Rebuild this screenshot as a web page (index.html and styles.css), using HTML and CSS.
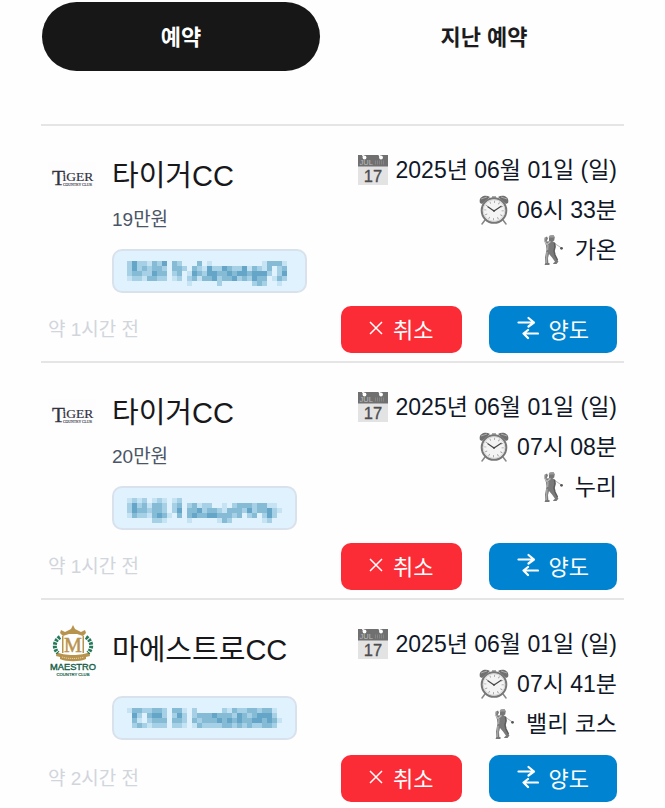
FILE: index.html
```html
<!DOCTYPE html>
<html lang="ko">
<head>
    <meta charset="UTF-8">
    <meta name="viewport" content="width=device-width, initial-scale=1.0">
    <title>예약</title>
    <link rel="stylesheet" href="styles.css">
</head>
<body>
    <!-- shared icons -->
    <svg class="sprite" aria-hidden="true">
        <symbol id="calendar" viewBox="0 0 30 30">
            <path d="M0 0h30v30H0z" fill="#e3e3e3"/>
            <path d="M0 0h30v11.500H0z" fill="#707070"/>
            <circle cx="6.500" cy="2.500" r="1.900" fill="#fff"/>
            <circle cx="23" cy="2.500" r="1.900" fill="#fff"/>
            <path d="M6.500 2.500L4.500 0M23 2.500L21 0" stroke="#fff" stroke-width="1.500"/>
            <text x="1.500" y="10.300" font-size="7.500" fill="#bbb">JUL</text>
            <path d="M17 7.500h10" stroke="#858585" stroke-width="4" stroke-dasharray="1 1"/>
            <text x="15" y="26.500" font-size="16.500" text-anchor="middle" fill="#4c4c4c" stroke="#4c4c4c" stroke-width="0.300">17</text>
        </symbol>
        <symbol id="clock" viewBox="0 0 30 30">
            <path d="M6 25l-3 4M24 25l3 4" stroke="#888" stroke-width="1.500" stroke-linecap="round"/>
            <path d="M1 8C-1 2 6-1 11 2L3 9zM29 8c2-6-5-9-10-6l8 7z" fill="#707070"/>
            <path d="M2 4l6-2M22 2l6 2" stroke="#aaa" stroke-width="1"/>
            <path d="M13 1h4v3h-4z" fill="#aaa"/>
            <circle cx="15" cy="15.500" r="12.300" fill="#eee" stroke="#777" stroke-width="2"/>
            <circle cx="15" cy="15.500" r="10.800" fill="#f4f4f4" stroke="#bbb" stroke-width="0.500"/>
            <circle cx="15" cy="15.500" r="8.700" fill="none" stroke="#999" stroke-width="2.200" stroke-dasharray="0.800 3.755"/>
            <path d="M8.500 11.500l6.500 4.500 7.500-5" fill="none" stroke="#444" stroke-width="1.100"/>
            <circle cx="15" cy="15.800" r="1" fill="#444"/>
        </symbol>
        <symbol id="golfer" viewBox="0 0 30 30">
            <path d="M14 6l10.500 7" stroke="#999" stroke-width="0.700"/>
            <circle cx="24.500" cy="13.300" r="1.400" fill="#555"/>
            <path d="M12 2.500l1.500-2 3 0 1.200 2-.500 3-2.700 1.500-2.500-1z" fill="#777"/>
            <path d="M11.500 2.500l1-2 4-.500 1.500 2.500z" fill="#999"/>
            <path d="M7 4.500l1-2 2-1 1 2-1.500 3 5.500-.500 3 1.500.500 4-1.500 4.500 1 4 3 6-2.500 1.500-3.500-5-3-3.500-1 4 .500 7.500H8.500l-.500-8 1.500-8-.500-4z" fill="#7a7a7a"/>
            <path d="M10 17l-.800 11M11 10l-.500 5" fill="none" stroke="#a5a5a5" stroke-width="1.500"/>
            <path d="M17.500 8l.500 4-1 4 1 4 2.500 5" fill="none" stroke="#5c5c5c" stroke-width="1.500"/>
            <path d="M8 2.500L7.500 6l2.500 3.500 3.500-3" fill="none" stroke="#bbb" stroke-width="1.200"/>
            <path d="M8.500 28h4v2h-5zM16.500 28l3.500-3 1.500 1.500-2 2.500h-3.500z" fill="#777"/>
        </symbol>
        <symbol id="cross" viewBox="0 0 14 14">
            <path d="M1 1l12 12M13 1L1 13" fill="none" stroke="currentColor" stroke-width="1.500"/>
        </symbol>
        <symbol id="swap" viewBox="0 0 22 24">
            <path d="M1.500 6.500H17M11.500 2l5.500 4.500-5.500 4" fill="none" stroke="currentColor" stroke-width="2.200" stroke-linecap="round" stroke-linejoin="round"/>
            <path d="M21 17.500H6.500M11 14l-4.500 3.500 4.500 4.500" fill="none" stroke="currentColor" stroke-width="2.200" stroke-linecap="round" stroke-linejoin="round"/>
        </symbol>
        <symbol id="tiger" viewBox="0 0 50 56">
            <path d="M0 12h48v27H0z" fill="#fdfdfe"/>
            <g font-family="Liberation Serif, serif" fill="#33343f" stroke="#33343f">
                <text x="4" y="35" font-size="21" stroke-width="0.300">T</text>
                <text x="14.500" y="31" font-size="13.500" stroke-width="0.200">iGER</text>
                <text x="15" y="35.500" font-size="3.800" stroke-width="0.100">COUNTRY CLUB</text>
            </g>
        </symbol>
        <symbol id="maestro" viewBox="0 0 50 56">
            <g fill="#b8934d">
                <path d="M25 1l2 4 6 3 4-2 1 3-3 3-6-2H21l-6 2-3-3 1-3 4 2 6-3z"/>
                <path d="M14 12h1.500v17H14zM34.500 12H36v17h-1.500z"/>
                <path d="M9 28c5 4 27 4 32 0l1 4-4 1v2c-6 3-20 3-26 0v-2l-4-1z"/>
                <text x="25" y="27.500" font-size="20" text-anchor="middle" stroke="#b8934d" stroke-width="0.500" font-family="Liberation Serif, serif">M</text>
            </g>
            <path d="M14 33c6 2 16 2 22 0" fill="none" stroke="#eadbb9" stroke-width="1" stroke-dasharray="1 1"/>
            <path d="M12 13C6 17 5 24 10 29M38 13c6 4 7 11 2 16" fill="none" stroke="#27795a" stroke-width="4" stroke-dasharray="2.500 1"/>
            <g fill="#175f49" stroke="#175f49" font-family="Liberation Sans, sans-serif" text-anchor="middle">
                <text x="25" y="46" font-size="9.300" stroke-width="0.400">MAESTRO</text>
                <text x="25" y="51.500" font-size="4.200" stroke-width="0.200">COUNTRY CLUB</text>
            </g>
        </symbol>
    </svg>

    <main class="container">
        <nav class="tabs">
            <button class="tab active" type="button">예약</button>
            <button class="tab" type="button">지난 예약</button>
        </nav>

        <section class="list">
            <article class="item">
                <div class="summary">
                    <svg class="logo"><use href="#tiger"/></svg>
                    <div class="info">
                        <h2 class="name">타이거CC</h2>
                        <p class="price">19만원</p>
                        <div class="badge"><svg class="mosaic" data-rows="242213240320003010000000000133310|242323320332032142243224132130230|233224330230143244334344344420240|122133220120231334233423243301320|000000000000100000200000023200100"></svg></div>
                    </div>
                    <div class="details">
                        <p><svg class="emoji"><use href="#calendar"/></svg>2025년 06월 01일 (일)</p>
                        <p><svg class="emoji"><use href="#clock"/></svg>06시 33분</p>
                        <p><svg class="emoji"><use href="#golfer"/></svg>가온</p>
                    </div>
                </div>
                <div class="actions">
                    <span class="ago">약 1시간 전</span>
                    <button class="btn cancel" type="button"><svg class="icon-cross"><use href="#cross"/></svg>취소</button>
                    <button class="btn transfer" type="button"><svg class="icon-swap"><use href="#swap"/></svg>양도</button>
                </div>
            </article>

            <article class="item">
                <div class="summary">
                    <svg class="logo"><use href="#tiger"/></svg>
                    <div class="info">
                        <h2 class="name">타이거CC</h2>
                        <p class="price">20만원</p>
                        <div class="badge"><svg class="mosaic" data-rows="1212012101200000000000000000000|2423133202302312200102333233110|2433233202403342332133324233421|1322134310303433443332302302420|0000022100001000001320000001200"></svg></div>
                    </div>
                    <div class="details">
                        <p><svg class="emoji"><use href="#calendar"/></svg>2025년 06월 01일 (일)</p>
                        <p><svg class="emoji"><use href="#clock"/></svg>07시 08분</p>
                        <p><svg class="emoji"><use href="#golfer"/></svg>누리</p>
                    </div>
                </div>
                <div class="actions">
                    <span class="ago">약 1시간 전</span>
                    <button class="btn cancel" type="button"><svg class="icon-cross"><use href="#cross"/></svg>취소</button>
                    <button class="btn transfer" type="button"><svg class="icon-swap"><use href="#swap"/></svg>양도</button>
                </div>
            </article>

            <article class="item">
                <div class="summary">
                    <svg class="logo"><use href="#maestro"/></svg>
                    <div class="info">
                        <h2 class="name">마에스트로CC</h2>
                        <div class="badge"><svg class="mosaic" data-rows="1332233203310200000213223323310|0420344202420233343332432344420|0310233303320323334343433443431|0232122202210132222332323223320|0000000000000000000000000000000"></svg></div>
                    </div>
                    <div class="details">
                        <p><svg class="emoji"><use href="#calendar"/></svg>2025년 06월 01일 (일)</p>
                        <p><svg class="emoji"><use href="#clock"/></svg>07시 41분</p>
                        <p><svg class="emoji"><use href="#golfer"/></svg>밸리 코스</p>
                    </div>
                </div>
                <div class="actions">
                    <span class="ago">약 2시간 전</span>
                    <button class="btn cancel" type="button"><svg class="icon-cross"><use href="#cross"/></svg>취소</button>
                    <button class="btn transfer" type="button"><svg class="icon-swap"><use href="#swap"/></svg>양도</button>
                </div>
            </article>
        </section>
    </main>

    <script src="script.js"></script>
</body>
</html>
```

FILE: styles.css
```css
* {
    margin: 0;
    padding: 0;
    box-sizing: border-box;
}

body {
    background: #fefefe;
    color: #101828;
    font-family: "Liberation Sans", "Noto Sans CJK KR", sans-serif;
}

button {
    border: none;
    font-family: inherit;
    cursor: pointer;
}

.sprite {
    display: none;
}

.container {
    padding: 2px 41px 0;
}

.tabs {
    display: grid;
    grid-template-columns: 1fr 1fr;
    gap: 25px;
    padding: 0 1px;
    margin-bottom: 53px;
}

.tab {
    height: 69px;
    padding-bottom: 4px;
    border-radius: 35px;
    background: transparent;
    color: #1c1c20;
    font-size: 22px;
    font-weight: bold;
}

.tab.active {
    background: #171717;
    color: #fff;
}

.item {
    border-top: 2px solid #e5e5e5;
    padding: 24px 7px 8px;
}

.summary {
    display: flex;
    align-items: flex-start;
}

.logo {
    width: 50px;
    height: 56px;
    margin-right: 14px;
    flex-shrink: 0;
}

.info {
    display: flex;
    flex-direction: column;
    flex: 1;
    padding-bottom: 2px;
}

.name {
    font-size: 29px;
    font-weight: normal;
    line-height: 52px;
    margin-bottom: 4px;
    color: #18181b;
    white-space: nowrap;
}

.price {
    font-size: 19px;
    line-height: 27px;
    color: #4a5565;
}

.badge {
    display: flex;
    align-items: center;
    width: fit-content;
    height: 44px;
    margin-top: 16px;
    padding: 4px 13px 0;
    background: #dff2fe;
    border: 2px solid #d9e2ec;
    border-radius: 10px;
}

.mosaic {
    display: block;
    height: 25px;
}

.details {
    text-align: right;
    font-size: 23px;
    line-height: 40px;
    white-space: nowrap;
}

.details p {
    display: flex;
    justify-content: flex-end;
    align-items: center;
}

.emoji {
    width: 30px;
    height: 30px;
    margin-right: 8px;
}

.actions {
    display: flex;
    align-items: center;
    margin-top: 11px;
}

.ago {
    margin-right: auto;
    padding-bottom: 4px;
    font-size: 19px;
    color: #d1d5dc;
}

.btn {
    display: flex;
    align-items: center;
    justify-content: center;
    height: 47px;
    padding: 0 28px 4px;
    border-radius: 10px;
    color: #fff;
    font-size: 22px;
}

.cancel {
    background: #fb2c36;
}

.transfer {
    margin-left: 27px;
    background: #0084d1;
}

.icon-cross {
    width: 14px;
    height: 14px;
    margin-right: 10px;
}

.icon-swap {
    width: 22px;
    height: 24px;
    margin-right: 10px;
}
```

FILE: script.js
```js
// Fills each masked badge with 5px blocks, one digit per block
const shades = ['', '#c5e3f2', '#a5d0e5', '#86bbd6', '#65a6c8'];
const size = 5;

document.querySelectorAll('.mosaic').forEach(svg => {
    const rows = svg.dataset.rows.split('|');
    svg.style.width = rows[0].length * size + 'px';

    rows.forEach((row, y) => {
        [...row].forEach((level, x) => {
            if (level === '0') return;
            const rect = document.createElementNS('http://www.w3.org/2000/svg', 'rect');
            rect.setAttribute('x', x * size);
            rect.setAttribute('y', y * size);
            rect.setAttribute('width', size);
            rect.setAttribute('height', size);
            rect.setAttribute('fill', shades[level]);
            svg.appendChild(rect);
        });
    });
});
```
